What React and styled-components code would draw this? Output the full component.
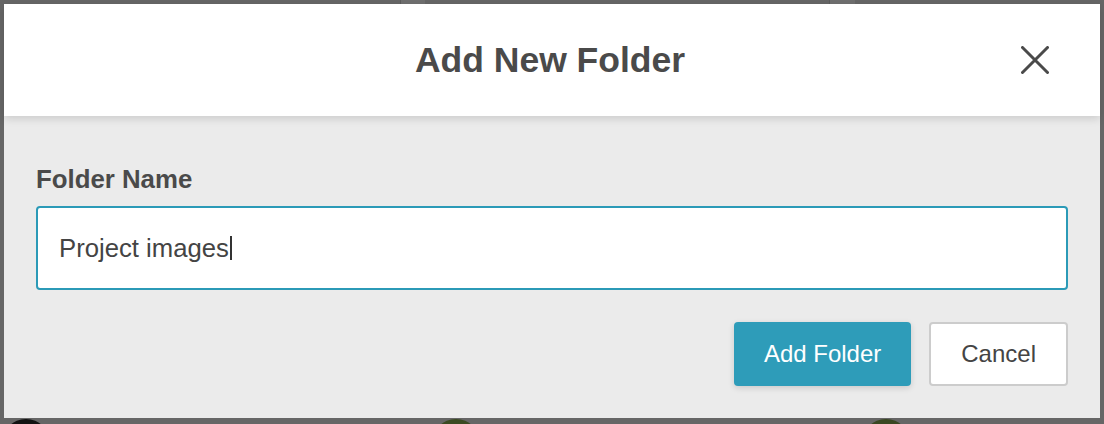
import React from "react";
import styled, { createGlobalStyle } from "styled-components";

const GlobalStyle = createGlobalStyle`
  html, body {
    margin: 0;
    padding: 0;
    background: #666666;
  }
  * { box-sizing: border-box; }
`;

const Page = styled.div`
  width: 1104px;
  height: 424px;
  overflow: hidden;
  background: #666666;
  display: flex;
  flex-direction: column;
  font-family: "Liberation Sans", Arial, Helvetica, sans-serif;
`;

const TopStrip = styled.div`
  height: 4px;
  display: flex;
  flex: none;
`;

const StripBlock = styled.div`
  width: ${(p) => p.$w}px;
  margin-left: ${(p) => p.$ml}px;
  background: #6f6f6f;
  border-left: 1px solid #5c5c5c;
`;

const Modal = styled.div`
  margin: 0 4px;
  height: 414px;
  flex: none;
  background: #ebebeb;
  display: flex;
  flex-direction: column;
`;

const Header = styled.header`
  height: 112px;
  flex: none;
  background: #ffffff;
  display: grid;
  grid-template-columns: 1fr auto 1fr;
  align-items: center;
  box-shadow: 0 3px 8px rgba(0, 0, 0, 0.13);
  position: relative;
  z-index: 1;
`;

const Title = styled.h1`
  grid-column: 2;
  margin: 0 0 0 -4px;
  font-size: 35.5px;
  font-weight: 700;
  color: #4a4a4a;
  line-height: 40px;
`;

const CloseButton = styled.button`
  grid-column: 3;
  justify-self: end;
  margin-right: 41px;
  width: 48px;
  height: 48px;
  border: 0;
  background: transparent;
  padding: 0;
  display: flex;
  align-items: center;
  justify-content: center;
  cursor: pointer;
  color: #4a4a4a;
`;

const Body = styled.div`
  padding: 48px 32px 32px;
  display: flex;
  flex-direction: column;
`;

const Label = styled.label`
  font-size: 25.8px;
  font-weight: 700;
  color: #4a4a4a;
  line-height: 30px;
`;

const Field = styled.div`
  margin-top: 12px;
  height: 84px;
  border: 2px solid #2b9ab7;
  border-radius: 4px;
  background: #ffffff;
  display: flex;
  align-items: center;
  padding: 0 19px 0 21px;
  font-size: 25.7px;
  color: #444444;
`;

const Caret = styled.span`
  display: inline-block;
  width: 2px;
  height: 24px;
  background: #333333;
  margin-left: 1px;
`;

const Actions = styled.div`
  margin-top: 32px;
  display: flex;
  justify-content: flex-end;
  gap: 18px;
`;

const Button = styled.button`
  height: 64px;
  padding: 0 30px;
  border-radius: 4px;
  font-family: "Liberation Sans", Arial, Helvetica, sans-serif;
  font-size: 24px;
  cursor: pointer;
  border: ${(p) => (p.$primary ? "0" : "2px solid #cccccc")};
  background: ${(p) => (p.$primary ? "#2e9cb9" : "#ffffff")};
  color: ${(p) => (p.$primary ? "#ffffff" : "#444444")};
  box-shadow: ${(p) => (p.$primary ? "0 2px 6px rgba(0,0,0,0.14)" : "none")};
`;

const AvatarRow = styled.div`
  margin-top: 1px;
  padding-left: 2px;
  display: flex;
  gap: 382px;
`;

const Avatar = styled.div`
  width: 48px;
  height: 48px;
  flex: none;
  border-radius: 50%;
  background: ${(p) => p.$color};
`;

export default function App() {
  return (
    <>
      <GlobalStyle />
      <Page>
        <TopStrip>
          <StripBlock $ml={400} $w={25} />
          <StripBlock $ml={404} $w={26} />
        </TopStrip>
        <Modal>
          <Header>
            <Title>Add New Folder</Title>
            <CloseButton aria-label="Close">
              <svg width="28" height="28" viewBox="0 0 28 28" fill="none">
                <path
                  d="M1.5 1.5L26.5 26.5M26.5 1.5L1.5 26.5"
                  stroke="currentColor"
                  strokeWidth="3"
                  strokeLinecap="round"
                />
              </svg>
            </CloseButton>
          </Header>
          <Body>
            <Label>Folder Name</Label>
            <Field>
              Project images
              <Caret />
            </Field>
            <Actions>
              <Button $primary>Add Folder</Button>
              <Button>Cancel</Button>
            </Actions>
          </Body>
        </Modal>
        <AvatarRow>
          <Avatar $color="#121212" />
          <Avatar $color="#3b4a22" />
          <Avatar $color="#3a4722" />
        </AvatarRow>
      </Page>
    </>
  );
}
